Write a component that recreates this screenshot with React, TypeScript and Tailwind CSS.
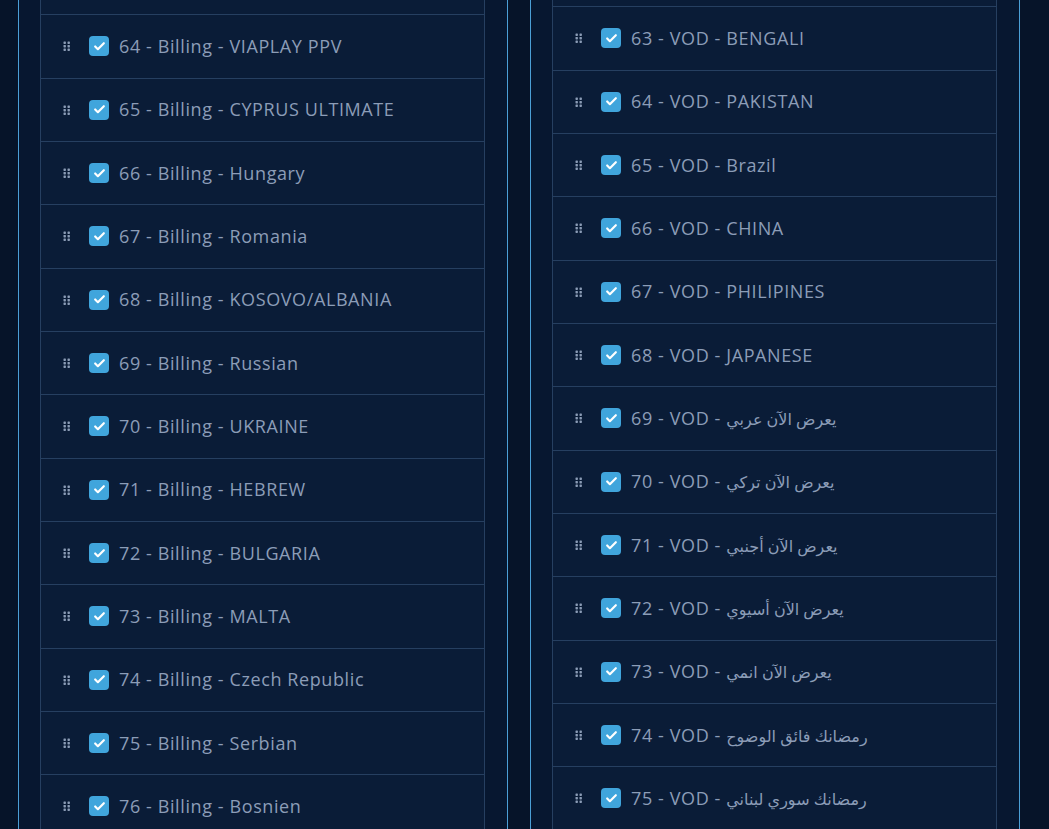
import { Check } from "lucide-react";

const billing = [
  "",
  "64 - Billing - VIAPLAY PPV",
  "65 - Billing - CYPRUS ULTIMATE",
  "66 - Billing - Hungary",
  "67 - Billing - Romania",
  "68 - Billing - KOSOVO/ALBANIA",
  "69 - Billing - Russian",
  "70 - Billing - UKRAINE",
  "71 - Billing - HEBREW",
  "72 - Billing - BULGARIA",
  "73 - Billing - MALTA",
  "74 - Billing - Czech Republic",
  "75 - Billing - Serbian",
  "76 - Billing - Bosnien",
];

const vod = [
  "",
  "63 - VOD - BENGALI",
  "64 - VOD - PAKISTAN",
  "65 - VOD - Brazil",
  "66 - VOD - CHINA",
  "67 - VOD - PHILIPINES",
  "68 - VOD - JAPANESE",
  "69 - VOD - يعرض الآن عربي",
  "70 - VOD - يعرض الآن تركي",
  "71 - VOD - يعرض الآن أجنبي",
  "72 - VOD - يعرض الآن أسيوي",
  "73 - VOD - يعرض الآن انمي",
  "74 - VOD - رمضانك فائق الوضوح",
  "75 - VOD - رمضانك سوري لبناني",
];

function Grip() {
  return (
    <svg width="8" height="10" viewBox="0 0 8 10" className="text-[#8b9cb6]">
      {[0, 1, 2].map((r) =>
        [0, 1].map((c) => (
          <rect key={`${r}-${c}`} x={c * 4 + 0.5} y={r * 3.5 + 0.5} width="2.4" height="2.4" rx="0.6" fill="currentColor" />
        ))
      )}
    </svg>
  );
}

function Label({ text }: { text: string }) {
  // arabic names: keep normal spacing so the letters stay joined
  const m = text.match(/^(.*? - )([\u0600-\u06FF].*)$/);
  if (!m) return <>{text}</>;
  return (
    <>
      {m[1]}
      <span className="tracking-normal text-[16px] font-normal">{m[2]}</span>
    </>
  );
}

function Row({ label }: { label: string }) {
  // rows scrolled out above the top only show their lower edge
  if (!label) return <li className="h-[63.33px] border-x border-b border-[#263f60] bg-[#0a1c37]" />;
  return (
    <li className="h-[63.33px] flex items-center border-x border-b border-[#263f60] bg-[#0a1c37] pl-[22px]">
      <Grip />
      <span className="ml-[18px] w-[20px] h-[20px] rounded-[4px] bg-[#40a5dc] flex items-center justify-center">
        <Check size={13} strokeWidth={4} className="text-white" />
      </span>
      <span className="ml-[10px] text-[18px] tracking-[0.6px] font-medium text-[#8c9db7] whitespace-nowrap">
        <Label text={label} />
      </span>
    </li>
  );
}

function Panel({ items, offset }: { items: string[]; offset: string }) {
  return (
    <section className="w-[490px] h-[829px] overflow-hidden border-x border-[#4b9fd6] bg-[#071730] pl-[21px] pr-[22px]">
      <ul className={`${offset} border-t border-[#263f60]`}>
        {items.map((it, i) => (
          <Row key={i} label={it} />
        ))}
      </ul>
    </section>
  );
}

export default function App() {
  return (
    <div
      className="w-[1049px] h-[829px] overflow-hidden bg-[#061429] flex gap-[22px] pl-[18px]"
      style={{ fontFamily: '"Open Sans", "DejaVu Sans", sans-serif' }}
    >
      <Panel items={billing} offset="-mt-[49px]" />
      <Panel items={vod} offset="-mt-[57px]" />
    </div>
  );
}
